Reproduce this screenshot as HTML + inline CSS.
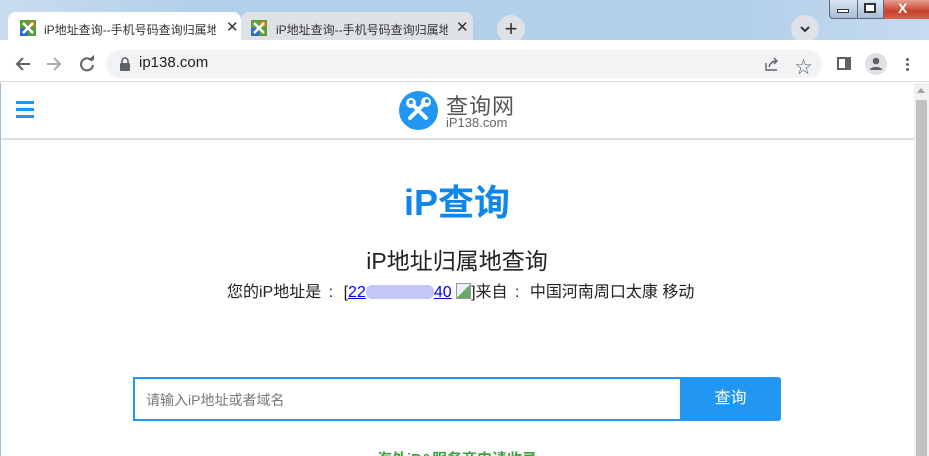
<!DOCTYPE html>
<html><head><meta charset="utf-8"><style>
*{margin:0;padding:0;box-sizing:border-box}
html,body{width:929px;height:456px;overflow:hidden}
body{position:relative;font-family:"Liberation Sans","Noto Sans CJK SC",sans-serif;background:#fff}
.abs{position:absolute}
</style></head><body>
<div class="abs" style="left:0;top:0;width:929px;height:40px;background:linear-gradient(90deg,#c9dcef,#b3d0ea 20%,#b3d0ea 80%,#c6dbef)"></div>
<div class="abs" style="left:8px;top:12px;width:233px;height:29px;background:#fff;border-radius:8px 8px 0 0"></div>
<div class="abs" style="left:241px;top:12px;width:232px;height:28px;background:#dee1e6;border-radius:8px 8px 0 0"></div>
<svg class="abs" style="left:20px;top:20px" width="16" height="16"><rect width="16" height="16" fill="#5a9e3a"/><rect x="0" y="8" width="8" height="8" fill="#2d6ec9"/><circle cx="12" cy="4" r="3" fill="#f07a20"/><path d="M3 3l10 10M13 3L3 13" stroke="#fff" stroke-width="2.5"/></svg>
<svg class="abs" style="left:251px;top:20px" width="16" height="16"><rect width="16" height="16" fill="#5a9e3a"/><rect x="0" y="8" width="8" height="8" fill="#2d6ec9"/><circle cx="12" cy="4" r="3" fill="#f07a20"/><path d="M3 3l10 10M13 3L3 13" stroke="#fff" stroke-width="2.5"/></svg>
<div class="abs" style="left:44px;top:21px;font-size:12px;color:#333;width:172px;overflow:hidden;white-space:nowrap">iP地址查询--手机号码查询归属地</div>
<div class="abs" style="left:276px;top:21px;font-size:12px;color:#333;width:172px;overflow:hidden;white-space:nowrap">iP地址查询--手机号码查询归属地</div>
<div class="abs" style="left:226px;top:18px;font-size:15px;color:#333">✕</div>
<div class="abs" style="left:456px;top:18px;font-size:15px;color:#333">✕</div>
<div class="abs" style="left:497px;top:15px;width:28px;height:28px;border-radius:50%;background:#dee1e6;text-align:center;line-height:27px;font-size:22px;color:#333">+</div>
<div class="abs" style="left:791px;top:15px;width:28px;height:28px;border-radius:50%;background:#dee1e6"></div>
<svg class="abs" style="left:799px;top:23px" width="12" height="12"><path d="M2 4l4 4 4-4" stroke="#333" stroke-width="2" fill="none"/></svg>
<div class="abs" style="left:829px;top:0;width:29px;height:19px;background:linear-gradient(#dbe6f3,#aabdd6);border:1px solid #5a6b80;border-top:0;border-radius:0 0 0 4px"></div>
<div class="abs" style="left:837px;top:9px;width:12px;height:4px;border:1px solid #333;background:#fff"></div>
<div class="abs" style="left:857px;top:0;width:27px;height:19px;background:linear-gradient(#dbe6f3,#aabdd6);border:1px solid #5a6b80;border-top:0"></div>
<div class="abs" style="left:864px;top:3px;width:12px;height:10px;border:2px solid #333;background:#fff"></div>
<div class="abs" style="left:884px;top:0;width:45px;height:19px;background:linear-gradient(#e8a090,#c7402a 60%,#d8624a)"></div>
<div class="abs" style="left:898px;top:0px;color:#fff;font-weight:bold;font-size:14px">X</div>
<div class="abs" style="left:0;top:40px;width:929px;height:42px;background:#fff;border-bottom:1px solid #dadce0"></div>
<div class="abs" style="left:106px;top:50px;width:716px;height:28px;border-radius:14px;background:#f1f3f4"></div>
<svg class="abs" style="left:14px;top:55px" width="18" height="18"><path d="M16 9H3M9 3L3 9l6 6" stroke="#5f6368" stroke-width="2" fill="none"/></svg>
<svg class="abs" style="left:45px;top:55px" width="18" height="18"><path d="M2 9h13M9 3l6 6-6 6" stroke="#aaa" stroke-width="2" fill="none"/></svg>
<svg class="abs" style="left:78px;top:55px" width="18" height="18"><path d="M14 6A6 6 0 1 0 15 10" stroke="#5f6368" stroke-width="2" fill="none"/><path d="M10 5h6V0z" fill="#5f6368"/></svg>
<svg class="abs" style="left:119px;top:57px" width="12" height="14"><rect x="1" y="6" width="10" height="8" rx="1" fill="#5f6368"/><path d="M3 6V4a3 3 0 0 1 6 0v2" stroke="#5f6368" stroke-width="1.6" fill="none"/></svg>
<div class="abs" style="left:139px;top:54px;font-size:15px;color:#202124">ip138.com</div>
<svg class="abs" style="left:764px;top:56px" width="16" height="16"><path d="M2 7v7h11" stroke="#5f6368" stroke-width="1.4" fill="none"/><path d="M5 11c1-4 4-6 8-6M10 2l3 3-3 3" stroke="#5f6368" stroke-width="1.4" fill="none"/></svg>
<div class="abs" style="left:795px;top:53px;font-size:17px;color:#5f6368">☆</div>
<div class="abs" style="left:837px;top:57px;width:14px;height:13px;border:2px solid #5f6368;border-right:6px solid #5f6368"></div>
<div class="abs" style="left:865px;top:53px;width:22px;height:22px;border-radius:50%;background:#dfe1e5"></div>
<svg class="abs" style="left:868px;top:56px" width="16" height="16"><circle cx="8" cy="5" r="3.3" fill="#5f6368"/><path d="M2 14c0-4 12-4 12 0z" fill="#5f6368"/></svg>
<div class="abs" style="left:906px;top:57px;width:3px;height:14px;background:radial-gradient(circle,#5f6368 1.4px,transparent 1.6px) 0 0/3px 5px"></div>
<div class="abs" style="left:0;top:83px;width:1px;height:373px;background:#9bbde0"></div>
<div class="abs" style="left:914px;top:83px;width:15px;height:373px;background:#f1f1f1"></div>
<div class="abs" style="left:916px;top:100px;width:11px;height:356px;background:#c1c1c1"></div>
<div class="abs" style="left:917px;top:88px;width:0;height:0;border:4px solid transparent;border-bottom:5px solid #a3a3a3;border-top:0"></div>
<div class="abs" style="left:1px;top:138px;width:913px;height:2px;background:#ddd"></div>
<div class="abs" style="left:16px;top:101px;width:18px;height:3px;background:#2196f3;box-shadow:0 7px 0 #2196f3,0 14px 0 #2196f3"></div>
<div class="abs" style="left:399px;top:91px;width:39px;height:39px;border-radius:50%;background:#2196f3"></div>
<svg class="abs" style="left:399px;top:91px" width="39" height="39"><path d="M11 27l16-16M27 27L11 11" stroke="#fff" stroke-width="4" stroke-linecap="round"/><circle cx="12" cy="12" r="5" fill="#fff"/><circle cx="27" cy="11" r="5" fill="#fff"/><circle cx="12" cy="11" r="2" fill="#2196f3"/><circle cx="28" cy="10" r="2" fill="#2196f3"/></svg>
<div class="abs" style="left:446px;top:89px;font-size:22px;color:#555;letter-spacing:1px">查询网</div>
<div class="abs" style="left:446px;top:115px;font-size:13px;color:#666">iP138.com</div>
<div class="abs" style="left:0;width:914px;top:180px;text-align:center;font-size:36px;font-weight:bold;color:#0e86ec;line-height:46px">iP查询</div>
<div class="abs" style="left:0;width:914px;top:246px;text-align:center;font-size:23px;color:#222;line-height:30px">iP地址归属地查询</div>
<div class="abs" style="left:227px;top:283px;font-size:16px;color:#222;white-space:nowrap;line-height:20px">您的iP地址是<span style="letter-spacing:3px">&nbsp;:&nbsp;</span>[<span style="color:#00e;text-decoration:underline">22<span style="display:inline-block;width:68px;height:14px;background:#c5c5f7;vertical-align:-2px;border-radius:6px"></span>40</span> <span style="display:inline-block;width:15px;height:16px;border:1px solid #999;background:linear-gradient(135deg,#eef 50%,#6a6 50%);vertical-align:-2px"></span>]来自<span style="letter-spacing:3px">&nbsp;:&nbsp;</span>中国河南周口太康 移动</div>
<div class="abs" style="left:133px;top:377px;width:548px;height:44px;border:2px solid #2196f3;border-right:0"></div>
<div class="abs" style="left:146px;top:390px;font-size:14px;color:#777">请输入iP地址或者域名</div>
<div class="abs" style="left:680px;top:377px;width:101px;height:44px;background:#2196f3;border-radius:0 3px 3px 0;color:#fff;font-size:16px;text-align:center;line-height:44px">查询</div>
<div class="abs" style="left:0;width:914px;top:451px;text-align:center;font-size:15px;color:#3ca03c;font-weight:bold;line-height:18px">海外iP&amp;服务商申请收录</div>
</body></html>
